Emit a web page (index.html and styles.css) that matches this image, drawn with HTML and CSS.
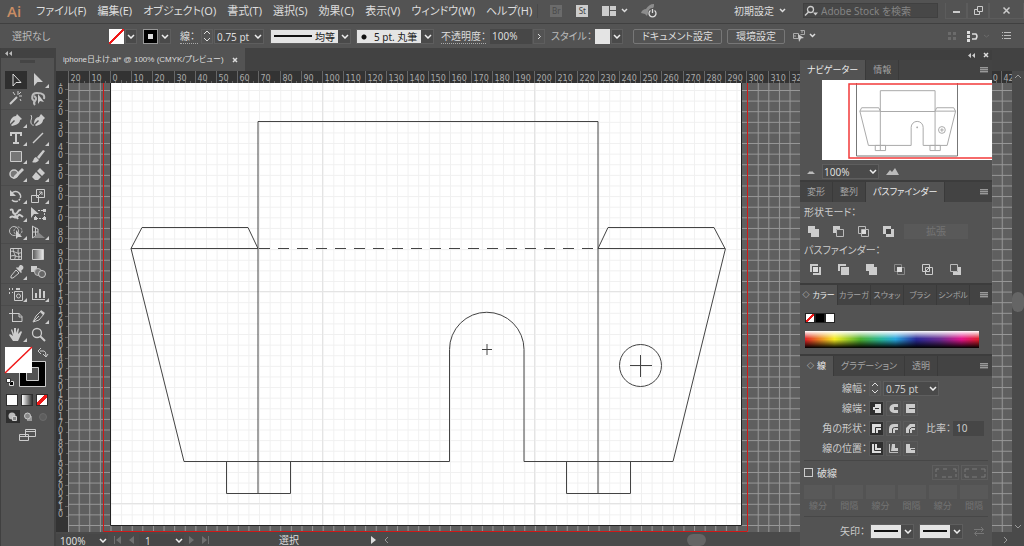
FILE: index.html
```html
<!DOCTYPE html>
<html lang="ja">
<head>
  <meta charset="utf-8">
  <title>iphone日よけ.ai</title>
  <link rel="stylesheet" href="styles.css">
</head>
<body>
  <header class="menubar">
    <span class="logo">Ai</span>
    <nav class="menus">
      <button>ファイル(F)</button>
      <button>編集(E)</button>
      <button>オブジェクト(O)</button>
      <button>書式(T)</button>
      <button>選択(S)</button>
      <button>効果(C)</button>
      <button>表示(V)</button>
      <button>ウィンドウ(W)</button>
      <button>ヘルプ(H)</button>
    </nav>
    <div class="apps">
      <button class="app off">Br</button>
      <button class="app">St</button>
      <button class="layout" aria-label="レイアウト">
        <svg width="14" height="10"><path fill="#ccc" d="M0 0h7v10H0zM8 0h6v4H8zM8 5h6v5H8z"/></svg>
      </button>
      <svg class="chev" width="7" height="5"><path d="M1 1l2.500 2.500L6 1"/></svg>
      <button class="rocket" aria-label="GPU">
        <svg width="16" height="14"><path fill="#8d8d8d" d="M0 9C1 6 3 5 5 5 7 2 9 0 13 0c0 2 0 3-1 4-3 0-5 2-5 5l-1 3-2-2z"/><path fill="none" stroke="#ddd" stroke-width="1.300" d="M9.500 6.500a3.500 3.500 0 1 0 4 0M11.500 5v4"/></svg>
      </button>
    </div>
    <div class="right">
      <button class="preset">初期設定</button>
      <svg class="chev" width="7" height="5"><path d="M1 1l2.500 2.500L6 1"/></svg>
      <label class="search">
        <svg width="14" height="12"><circle cx="6.500" cy="4.500" r="3" fill="none" stroke="#ccc" stroke-width="1.300"/><path d="M4.500 7L1 10.500" stroke="#ccc" stroke-width="1.500"/><path d="M9 7.500h5l-2.500 3z" fill="#ccc"/></svg>
        <input type="text" placeholder="Adobe Stock を検索" aria-label="検索">
      </label>
      <div class="window">
        <button aria-label="最小化"><svg width="9" height="9"><path fill="#ccc" d="M1 5h7v2H1z"/></svg></button>
        <button aria-label="元に戻す"><svg width="9" height="9"><path fill="none" stroke="#ccc" d="M3.500 5.500v-5h5v5zM3.500 3.500h-3v5h5v-3"/></svg></button>
        <button class="wide" aria-label="閉じる"><svg width="9" height="9"><path stroke="#ccc" stroke-width="1.500" d="M1.500 1.500l6 6M7.500 1.500l-6 6"/></svg></button>
      </div>
    </div>
  </header>

  <div class="control">
    <span class="state">選択なし</span>
    <div class="pair">
      <button class="none" aria-label="塗り"></button>
      <select aria-label="塗りの種類"><option></option></select>
    </div>
    <div class="pair">
      <button class="stroke" aria-label="線の色"></button>
      <select aria-label="線の種類"><option></option></select>
    </div>
    <label class="dotted weight" for="weight">線：</label>
    <div class="pair">
      <button class="spin" aria-label="増減"><svg width="8" height="12"><path d="M1 4l3-3 3 3M1 8l3 3 3-3"/></svg></button>
      <select class="value" id="weight"><option>0.75 pt</option></select>
    </div>
    <select class="light profile" aria-label="可変線幅"><option>均等</option></select>
    <select class="light brush" aria-label="ブラシ"><option>5 pt. 丸筆</option></select>
    <div class="pair">
      <label class="dotted" for="opacity">不透明度：</label>
      <input class="opacity" id="opacity" type="text" value="100%">
      <button class="step" aria-label="不透明度を開く"><svg width="5" height="7"><path d="M1 1l2.500 2.500L1 6"/></svg></button>
    </div>
    <div class="pair">
      <label class="style" for="style">スタイル：</label>
      <span class="sample"></span>
      <select id="style"><option></option></select>
    </div>
    <div class="buttons">
      <button class="outlined">ドキュメント設定</button>
      <button class="outlined">環境設定</button>
    </div>
    <svg width="23" height="12"><path fill="none" stroke="#aaa" d="M.500 3.500h5v5h-5zM7.500.500h4v4h-4M0 6h3M9 0v3"/><path fill="#ccc" d="M5 4l6 4-3 .500L6 12z"/><path fill="none" stroke="#ddd" stroke-width="1.500" d="M17 4l2.500 2.500L22 4"/></svg>
    <div class="align">
      <svg width="8" height="8"><path fill="#6b6b6b" d="M0 0h3v3H0zM5 0h3v3H5zM0 5h3v3H0zM5 5h3v3H5z"/></svg>
      <svg width="24" height="11"><path fill="#ddd" d="M0 0h3v3H0zM0 4h3v3H0zM0 8h3v3H0z"/><path fill="none" stroke="#ddd" stroke-width="1.500" d="M5 3h4q2 2 0 5H5"/><path fill="none" stroke="#6b6b6b" d="M17 4l2.500 2L22 4"/></svg>
      <svg width="9" height="8"><path fill="#bbb" d="M0 0h1v1H0zM2 0h7v1H2zM0 3h1v1H0zM2 3h7v1H2zM0 6h1v1H0zM2 6h7v1H2z"/></svg>
    </div>
  </div>

  <main class="work">
    <aside class="toolbox">
      <div class="fold"><svg width="7" height="5"><path fill="#bbb" d="M3 0v5L0 2.500zM7 0v5L4 2.500z"/></svg></div>
      <div class="handle"></div>
      <div class="tools">
        <button class="on" aria-label="選択"><svg><path fill="none" stroke="#ddd" d="M5 2v12l3-3.500h5z"/></svg></button>
        <button class="more" aria-label="ダイレクト選択"><svg><path fill="#ccc" d="M4 1v13l3.500-4H13z"/></svg></button>
        <button aria-label="自動選択"><svg><path stroke="#ccc" stroke-width="2" d="M2 14l7-7"/><path stroke="#ccc" d="M10 1v4M14 6h-3M5 2l2 3M13 2l-2 2M12 9l1 2"/></svg></button>
        <button aria-label="なげなわ"><svg><path fill="none" stroke="#bbb" stroke-width="2" d="M5 11C1 10 1 3 7 3s8 2 7 6M4 6c2 1 3 3 1 5s-1 3 0 4"/><path fill="#ccc" d="M8 4v10l2-3 4 1z"/></svg></button>
      </div>
      <div class="tools">
        <button class="more" aria-label="ペン"><svg><path fill="#ccc" d="M9 2l5 5-2 1c0 3-3 5-8 6l-1-1 4-4-1-1-4 4C2 7 5 4 8 4z"/></svg></button>
        <button aria-label="曲線"><svg><path fill="#ccc" d="M11 2l4 4-2 2c0 3-3 5-7 6l-1-1 4-4-1-1-4 4c0-4 2-7 5-7z"/><path fill="none" stroke="#ccc" d="M1 3c2 3-1 5 0 8s3 2 3 2"/></svg></button>
        <button class="more" aria-label="文字"><svg><path fill="none" stroke="#ccc" stroke-width="2" d="M3 6V3h10v3M8 3v10M5 13h6"/></svg></button>
        <button class="more" aria-label="直線"><svg><path stroke="#ccc" stroke-width="1.500" d="M3 13L13 3"/></svg></button>
        <button class="more" aria-label="長方形"><svg><path fill="#777" stroke="#ccc" d="M2.500 3.500h11v10h-11z"/></svg></button>
        <button class="more" aria-label="ブラシ"><svg><path fill="#ccc" d="M13 2l2 1-6 8-2-2zM6 9l3 3c-2 3-5 3-7 2 2-1 1-4 4-5z"/></svg></button>
        <button class="more" aria-label="Shaper"><svg><circle cx="6" cy="8" r="4" fill="#777" stroke="#ccc" stroke-width="1.500"/><path fill="#ccc" d="M14 2l2 2-8 8-3 1 1-3z"/></svg></button>
        <button class="more" aria-label="消しゴム"><svg><path fill="#ccc" d="M10 2l5 5-3 3-5-5zM6 6l5 5-3 3H5l-3-3z"/></svg></button>
      </div>
      <div class="tools">
        <button class="more" aria-label="回転"><svg><path fill="none" stroke="#ccc" stroke-width="1.500" d="M4 5a5 5 0 1 1 0 7" stroke-dasharray="13 1 2 1"/><path fill="#ccc" d="M2 2v6h6z"/></svg></button>
        <button class="more" aria-label="拡大・縮小"><svg><path fill="none" stroke="#ccc" d="M6.500 1.500h8v8h-8zM1.500 7.500h7v7h-7zM8 8l4-4M9 4h3v3"/></svg></button>
        <button class="more" aria-label="線幅"><svg><path fill="none" stroke="#ccc" stroke-width="2" d="M2 4c5-2 1 4 5 4s2-5 6-4M2 12c2-4 5 1 7-1s1-4 6 0M5 6l5 7"/></svg></button>
        <button aria-label="自由変形"><svg><path fill="#ccc" d="M1 1v11l3-4h5z"/><path fill="none" stroke="#ccc" stroke-dasharray="2 1" d="M8 4.500h6.500v8h-9V9"/><path fill="#ccc" d="M13 3h3v3h-3zM13 11h3v3h-3zM4 11h3v3H4z"/></svg></button>
        <button class="more" aria-label="シェイプ形成"><svg><circle cx="6" cy="7" r="4.500" fill="none" stroke="#bbb"/><circle cx="10" cy="7" r="4" fill="none" stroke="#bbb" stroke-dasharray="2 1"/><path fill="#ccc" d="M8 6v9l2-2h4z"/></svg></button>
        <button class="more" aria-label="遠近グリッド"><svg><path fill="none" stroke="#ccc" d="M2.500 2v12M2 2l6 3v6l-6 3M5.500 4v9M2 8h6"/><path fill="#888" d="M8 8l7 6H4z"/></svg></button>
      </div>
      <div class="tools">
        <button aria-label="メッシュ"><svg><path fill="none" stroke="#ccc" d="M2.500 2.500h11v11h-11zM2 6c4-3 7 4 12 0M2 11c4-4 8 2 12-1M6 2c-3 4 4 7 0 12M11 2c-3 4 2 8-1 12"/></svg></button>
        <button aria-label="グラデーション"><svg><defs><linearGradient id="gray"><stop stop-color="#555"/><stop offset="1" stop-color="#eee"/></linearGradient></defs><path fill="url(#gray)" stroke="#ccc" d="M2.500 3.500h11v10h-11z"/></svg></button>
        <button class="more" aria-label="スポイト"><svg><path fill="#ccc" d="M12 1c3 0 4 2 3 4l-2 2 1 1-1 1-5-5 1-1 1 1z"/><path fill="none" stroke="#ccc" d="M8 6l3 3-6 5H3v-2z"/></svg></button>
        <button aria-label="ブレンド"><svg><path fill="#ccc" d="M1 2h6v6H1z"/><circle cx="8" cy="8" r="3.500" fill="#777" stroke="#bbb"/><circle cx="12" cy="10" r="3.500" fill="#666" stroke="#ccc"/></svg></button>
      </div>
      <div class="tools">
        <button class="more" aria-label="シンボルスプレー"><svg><path fill="#ccc" d="M1 2h1v2H1zM4 2h1v2H4zM1 6h1v2H1zM4 6h1v1H4zM8 2h4v2H8z"/><path fill="none" stroke="#ccc" d="M6.500 5.500h8v9h-8z"/><circle cx="10.500" cy="10" r="2" fill="none" stroke="#ccc"/></svg></button>
        <button class="more" aria-label="棒グラフ"><svg><path fill="#ccc" d="M2 2h1v12H2zM2 13h13v1H2zM5 7h2v5H5zM9 3h2v9H9zM13 5h2v7h-2z"/></svg></button>
      </div>
      <div class="tools last">
        <button aria-label="アートボード"><svg><path fill="none" stroke="#ccc" d="M4.500 1v13M1 5.500h7M4 13.500h10v-5l-3-3H7M11 5v4h3"/></svg></button>
        <button class="more" aria-label="スライス"><svg><path fill="none" stroke="#ccc" d="M11 3l3 3-5 6-6 2 3-6zM4 13l5-5"/><path fill="#ccc" d="M11 2l4 3-2 2-3-3z"/></svg></button>
        <button class="more" aria-label="手のひら"><svg><path fill="#ccc" d="M5 15L1 9l1-1 3 2-2-6 1-1 2 5V2h2v5l2-5 1 1-1 5 3-3 1 1-3 7-1 2z"/></svg></button>
        <button aria-label="ズーム"><svg><circle cx="7" cy="7" r="4.500" fill="none" stroke="#ccc" stroke-width="1.300"/><path stroke="#ccc" stroke-width="2" d="M10 10l5 5"/></svg></button>
      </div>
      <svg class="paint" width="42" height="42">
        <path fill="none" stroke="#ccc" d="M35 4h4q2 0 2 5M36 1l-3 3 3 3M38 7l3 3 2-3"/>
        <path fill="#000" stroke="#ccc" d="M14.500 14.500h26v25h-26z"/>
        <path fill="#535353" stroke="#ccc" d="M21.500 20.500h12v13h-12z"/>
        <path fill="#fff" d="M0 0h27v26H0z"/>
        <path stroke="#f01818" stroke-width="1.500" d="M0 26L27 0"/>
        <path fill="#000" stroke="#ddd" d="M4.500 34.500h4v4h-4z"/><path fill="#fff" stroke="#333" d="M1.500 31.500h4v4h-4z"/>
      </svg>
      <div class="modes">
        <button class="white" aria-label="カラー"></button>
        <button class="grad" aria-label="グラデーション塗り"></button>
        <button class="none thick" aria-label="なし"></button>
      </div>
      <div class="modes draw">
        <button class="on" aria-label="標準描画"><svg width="10" height="10"><circle cx="4" cy="4" r="3.500" fill="#bbb"/><path fill="#888" stroke="#ccc" d="M4.500 4.500h4v4h-4z"/></svg></button>
        <button aria-label="背面描画"><svg width="10" height="10"><path fill="#999" d="M4 4h5v5H4z"/><circle cx="4.500" cy="4" r="3" fill="#888" stroke="#ccc"/></svg></button>
        <button aria-label="内側描画"><svg width="10" height="10"><circle cx="5" cy="5" r="3.500" fill="#5e5e5e" stroke="#6b6b6b"/></svg></button>
      </div>
      <svg class="screen" width="18" height="13"><path fill="#535353" stroke="#ccc" d="M6.500.500h10v7h-10zM6 2.500h11M.500 5.500h9v6h-9zM0 7.500h10"/></svg>
    </aside>

    <section class="document">
      <div class="tabs">
        <div class="tab">iphone日よけ.ai* @ 100% (CMYK/プレビュー)
          <button aria-label="タブを閉じる"><svg width="6" height="6"><path stroke="#ddd" stroke-width="1.500" d="M1 1l4 4M5 1L1 5"/></svg></button>
        </div>
      </div>
      <div class="body">
        <div class="corner"></div>
        <svg class="ruler-x" id="rulerX"></svg>
        <div class="scroll-v">
          <svg width="8" height="5"><path d="M1 4l3-3 3 3"/></svg>
          <i></i>
          <svg width="8" height="5"><path d="M1 1l3 3 3-3"/></svg>
        </div>
        <svg class="ruler-y" id="rulerY"></svg>
        <svg class="canvas">
          <defs>
            <pattern id="gridDark" x="42.500" y="7" width="10.610" height="10.610" patternUnits="userSpaceOnUse">
              <path d="M0 .500h10.610M.500 0v10.610" stroke="#989898"/>
            </pattern>
            <pattern id="gridLight" x="42.500" y="7" width="10.610" height="10.610" patternUnits="userSpaceOnUse">
              <path d="M0 .500h10.610M.500 0v10.610" stroke="#f0f0f0"/>
            </pattern>
            <g id="artwork" fill="none">
              <path vector-effect="non-scaling-stroke" d="M148 413.500V41.500h340v372"/>
              <path vector-effect="non-scaling-stroke" d="M148 168.500H21l11-21h106zM488 168.500h127l-11-21H498z"/>
              <path vector-effect="non-scaling-stroke" d="M21 168.500l53 213h265.500v-112a37.250 37.250 0 0 1 74.500 0v112h149l52.500-213"/>
              <path vector-effect="non-scaling-stroke" d="M116.500 381.500h64v32h-64zM456.500 381.500h64v32h-64z"/>
              <circle vector-effect="non-scaling-stroke" cx="530.500" cy="285.500" r="21"/>
              <path vector-effect="non-scaling-stroke" d="M520 285.500h22M530.500 275v22M372 269.500h10M377 264v11"/>
            </g>
          </defs>
          <rect width="100%" height="100%" fill="#5f5f5f"/>
          <rect width="100%" height="100%" fill="url(#gridDark)"/>
          <g transform="translate(42 -3)">
            <path fill="#fff" d="M.500 0h631v445.500H.500z"/>
          </g>
          <path fill="url(#gridLight)" d="M42 0h631v442H42z"/>
          <path stroke="#e4e4e4" d="M254.500 0v442M466.500 0v442M42 208.500h631M42 420.500h631"/>
          <g transform="translate(42 -3)">
            <path fill="none" stroke="#222" d="M.500 0v445.500h631V0"/>
            <path fill="none" stroke="#d01818" d="M-6.500 0v451.500h644V0"/>
            <use href="#artwork" stroke="#444"/>
            <path stroke="#444" stroke-dasharray="11 8" d="M149 168.500h338"/>
          </g>
        </svg>
      </div>
      <footer class="status">
        <select class="zoom" aria-label="ズーム"><option>100%</option></select>
        <button aria-label="最初"><svg width="8" height="8"><path d="M0 0h1v8H0zM7 0v8L2 4z"/></svg></button>
        <button aria-label="前へ"><svg width="8" height="8"><path d="M6 0v8L1 4z"/></svg></button>
        <select class="page" aria-label="アートボード番号"><option>1</option></select>
        <button aria-label="次へ"><svg width="8" height="8"><path d="M2 0v8l5-4z"/></svg></button>
        <button aria-label="最後"><svg width="8" height="8"><path d="M1 0v8l5-4zM7 0h1v8H7z"/></svg></button>
        <span class="mode">選択</span>
        <button class="lit" aria-label="状態メニュー"><svg width="8" height="8"><path d="M2 0v8l5-4z"/></svg></button>
        <div class="scroll-h">
          <svg width="5" height="8"><path d="M4 1L1 4l3 3"/></svg>
          <i></i>
          <svg width="5" height="8"><path d="M1 1l3 3-3 3"/></svg>
        </div>
      </footer>
    </section>
  </main>

  <aside class="dock">
    <div class="dock-head">
      <svg width="7" height="5"><path fill="#ccc" d="M3 0v5L0 2.500zM7 0v5L4 2.500z"/></svg>
      <svg width="6" height="6"><path stroke="#ddd" stroke-width="1.500" d="M1 1l4 4M5 1L1 5"/></svg>
    </div>

    <section class="panel">
      <div class="panel-tabs">
        <button class="on">ナビゲーター</button><button>情報</button>
        <span class="lines"></span>
      </div>
      <svg class="preview" viewBox="0 0 170 80">
        <path fill="#fff" d="M0 0h170v80H0z"/>
        <path fill="none" stroke="#777" d="M34.500 3v73h101V3"/>
        <use href="#artwork" stroke="#aaa" transform="translate(34.500 4) scale(.161)"/>
        <path stroke="#aaa" d="M58 31.500h55"/>
        <path fill="none" stroke="#f23a3a" stroke-width="1.500" d="M172 4H27v74h145"/>
      </svg>
      <div class="nav-zoom">
        <svg width="8" height="5"><path fill="#bbb" d="M0 5l3-3 1 1 1-1 3 3z"/></svg>
        <select aria-label="表示倍率"><option>100%</option></select>
        <svg width="13" height="7"><path fill="#bbb" d="M0 7l4-5 2 2 3-4 4 7z"/></svg>
      </div>
    </section>

    <section class="panel">
      <div class="panel-tabs">
        <button>変形</button><button>整列</button><button class="on">パスファインダー</button>
        <span class="lines"></span>
      </div>
      <div class="path">
        <h2>形状モード：</h2>
        <div class="shapes">
          <button aria-label="合体"><svg><path fill="#ccc" d="M1 1h7v3h4v8H4V8H1z"/></svg></button>
          <button aria-label="前面型抜き"><svg><path fill="#ccc" d="M1 1h7v3H4v4H1z"/><path fill="none" stroke="#bbb" d="M4.500 4.500h7v7h-7z"/></svg></button>
          <button aria-label="交差"><svg><path fill="none" stroke="#bbb" d="M1.500 1.500h7v7h-7zM4.500 4.500h7v7h-7z"/><path fill="#ddd" d="M5 5h4v4H5z"/></svg></button>
          <button aria-label="中マド"><svg><path fill="#ccc" d="M1 1h8v3h3v8H4V9H1z"/><path fill="#444" d="M4 4h5v5H4z"/></svg></button>
          <button class="expand" disabled>拡張</button>
        </div>
        <h2>パスファインダー：</h2>
        <div class="shapes finder">
          <button aria-label="分割"><svg><path fill="#ccc" d="M1 1h8v2H3v6H1zM12 12H4v-2h6V4h2z"/><path fill="#ddd" d="M4 4h5v5H4z"/></svg></button>
          <button aria-label="刈り込み"><svg><path fill="#ccc" d="M1 1h8v2H3v5H1zM4 4h8v8H4z"/></svg></button>
          <button aria-label="合流"><svg><path fill="#ccc" d="M1 1h8v3h3v8H4V8H1z"/></svg></button>
          <button aria-label="切り抜き"><svg><path fill="none" stroke="#888" d="M1.500 1.500h7v7h-7zM4.500 4.500h7v7h-7z"/><path fill="#ddd" d="M4 4h5v5H4z"/></svg></button>
          <button aria-label="アウトライン"><svg><path fill="none" stroke="#ccc" d="M1.500 1.500h7v7h-7zM4.500 4.500h7v7h-7zM4 9l5-5"/></svg></button>
          <button aria-label="背面型抜き"><svg><path fill="#ccc" d="M9 4h3v8H4V9h5z"/><path fill="none" stroke="#bbb" d="M1.500 1.500h7v7h-7z"/></svg></button>
        </div>
      </div>
    </section>

    <section class="panel">
      <div class="panel-tabs small">
        <button class="on"><i>◇</i>カラー</button><button>カラーガ</button><button>スウォッ</button><button>ブラシ</button><button>シンボル</button>
        <span class="lines"></span>
      </div>
      <div class="color">
        <div class="chips"><button class="none" aria-label="なし"></button><button class="black" aria-label="黒"></button><button class="white" aria-label="白"></button></div>
        <div class="spectrum"></div>
      </div>
    </section>

    <section class="panel">
      <div class="panel-tabs">
        <button class="on"><i>◇</i>線</button><button>グラデーション</button><button>透明</button>
        <span class="lines"></span>
      </div>
      <div class="line-form">
        <div class="row">
          <label for="width">線幅：</label>
          <button class="spin" aria-label="増減"><svg width="8" height="12"><path d="M1 4l3-3 3 3M1 8l3 3 3-3"/></svg></button>
          <select class="value" id="width"><option>0.75 pt</option></select>
        </div>
        <div class="row">
          <span class="name">線端：</span>
          <button class="on" aria-label="線端なし"><svg><path fill="#ddd" d="M4 1h6v9H4V7H2V4h2z"/><path fill="#333" d="M4 5h4v1H4z"/></svg></button>
          <button aria-label="丸型線端"><svg><path fill="#ccc" d="M10 1H6C0 1 0 10 6 10h4V7H6V4h4z"/></svg></button>
          <button aria-label="突出線端"><svg><path fill="#ccc" d="M1 1h9v9H1z"/><path fill="#444" d="M4 5h6v1H4z"/></svg></button>
        </div>
        <div class="row">
          <span class="name">角の形状：</span>
          <button class="on" aria-label="マイター結合"><svg><path fill="#ddd" d="M1 1h9v6H7v3H1z"/><path stroke="#333" fill="none" d="M4.500 10V4.500H10"/></svg></button>
          <button aria-label="ラウンド結合"><svg><path fill="#ccc" d="M1 10V6q0-5 5-5h4v6H7v3z"/><path stroke="#444" fill="none" d="M4.500 10V6q0-1 2-1.500H10"/></svg></button>
          <button aria-label="ベベル結合"><svg><path fill="#ccc" d="M1 10V5l4-4h5v6H7v3z"/><path stroke="#444" fill="none" d="M4.500 10V6.500l2-2H10"/></svg></button>
          <label class="ratio" for="ratio">比率：</label>
          <input id="ratio" type="text" value="10">
        </div>
        <div class="row">
          <span class="name">線の位置：</span>
          <button class="on" aria-label="中央"><svg><path fill="#ddd" d="M1 1h5v4h4v5H1z"/><path stroke="#333" fill="none" d="M3.500 1v6.500H10"/></svg></button>
          <button aria-label="内側"><svg><path fill="#ccc" d="M4 1h3v4h3v3H3z"/><path stroke="#bbb" fill="none" d="M1.500 1v8.500H10"/></svg></button>
          <button aria-label="外側"><svg><path fill="#ccc" d="M1 1h4v4h5v5H1z"/><path stroke="#555" fill="none" d="M6 6.500h4"/></svg></button>
        </div>
      </div>
      <div class="dashes">
        <div class="dash-head">
          <label><input type="checkbox">破線</label>
          <button aria-label="長さを保持" disabled><svg width="22" height="10"><path d="M4 1H1v3M1 6v3M7 9h4M13 9h4M18 1h3v3M21 6v3M8 1h4"/></svg></button>
          <button aria-label="コーナーに整列" disabled><svg width="22" height="10"><path d="M5 1H1v3M1 6v3h4M8 9h5M17 9h4V6M21 4V1h-4M8 1h5"/></svg></button>
        </div>
        <div class="dash-cells">
          <label><input type="text" disabled>線分</label>
          <label><input type="text" disabled>間隔</label>
          <label><input type="text" disabled>線分</label>
          <label><input type="text" disabled>間隔</label>
          <label><input type="text" disabled>線分</label>
          <label><input type="text" disabled>間隔</label>
        </div>
      </div>
      <div class="arrows">
        <label for="arrow">矢印：</label>
        <select class="light" id="arrow"><option></option></select>
        <select class="light" aria-label="終点の矢印"><option></option></select>
        <svg width="10" height="9"><path stroke="#777" fill="none" d="M0 2.500h9M7 0l2.500 2.500L7 5M10 6.500H1M3 4L.500 6.500 3 9"/></svg>
      </div>
    </section>
  </aside>

  <script src="script.js"></script>
</body>
</html>
```

FILE: styles.css
```css
* {
  box-sizing: border-box;
}

body {
  display: flex;
  flex-direction: column;
  position: relative;
  height: 100vh;
  margin: 0;
  overflow: hidden;
  background: #424242;
  color: #ddd;
  font-family: "Noto Sans", "Noto Sans CJK JP", sans-serif;
  font-size: 10px;
  line-height: 14px;
  font-feature-settings: "palt";
}

button, input, select {
  margin: 0;
  padding: 0;
  border: 0;
  border-radius: 0;
  background: none;
  color: inherit;
  font: inherit;
  font-feature-settings: inherit;
}

button {
  display: flex;
  align-items: center;
  justify-content: center;
  flex: none;
  white-space: nowrap;
}

svg {
  display: block;
  flex: none;
}

select {
  flex: none;
  appearance: none;
  width: 12px;
  height: 15px;
  border: 1px solid #5e5e5e;
  background: #4a4a4a url("data:image/svg+xml,%3Csvg xmlns='http://www.w3.org/2000/svg' width='8' height='5'%3E%3Cpath d='M1 1l3 3 3-3' fill='none' stroke='%23eee' stroke-width='1.5'/%3E%3C/svg%3E") no-repeat right 1px center;
}

.chev path, .spin path, .step path, .scroll-v path, .scroll-h path {
  fill: none;
  stroke: #ddd;
  stroke-width: 1.5px;
}

.none {
  background: linear-gradient(to bottom right, #fff 46%, #f01818 46%, #f01818 54%, #fff 54%);
}

.none.thick {
  background: linear-gradient(to bottom right, #fff 38%, #f01818 38%, #f01818 62%, #fff 62%);
}

.white {
  background: #fff;
}

.black {
  background: #000;
}

/* menu bar */
.menubar {
  display: flex;
  align-items: center;
  flex: none;
  height: 24px;
  padding: 0 0 2px 7px;
  background: #535353;
  border-bottom: 1px solid #404040;
}

.logo {
  width: 29px;
  color: #c98d64;
  font-family: "Open Sans", sans-serif;
  font-size: 15px;
  font-weight: 600;
}

.menus {
  display: flex;
  gap: 11px;
  font-size: 11px;
}

.apps {
  display: flex;
  align-items: center;
  margin-left: 5px;
  padding-left: 12px;
  border-left: 1px solid #4a4a4a;
}

.app {
  width: 12px;
  height: 12px;
  margin-right: 14px;
  background: #ccc;
  color: #444;
  font-size: 8px;
  line-height: 12px;
}

.app.off {
  background: #6b6b6b;
  color: #4a4a4a;
}

.layout {
  margin-right: 5px;
}

.rocket {
  margin-left: 13px;
}

.right {
  display: flex;
  align-items: center;
  margin-left: auto;
}

.preset {
  margin-right: 5px;
}

.search {
  display: flex;
  align-items: center;
  width: 135px;
  height: 15px;
  margin: 0 7px 0 17px;
  background: #474747;
  border: 1px solid #404040;
}

.search input {
  width: 110px;
  margin-left: 3px;
}

.search input::placeholder {
  color: #848484;
}

.window {
  display: flex;
}

.window button {
  width: 22px;
  height: 16px;
  border: 1px solid #5c5c5c;
  border-top: 0;
}

.window .wide {
  width: 35px;
}

/* control bar */
.control {
  display: flex;
  align-items: center;
  flex: none;
  height: 24px;
  padding-left: 12px;
  background: #535353;
}

.state {
  width: 97px;
  color: #bbb;
}

.pair {
  display: flex;
  align-items: center;
  gap: 1px;
  margin-right: 6px;
}

.pair .none, .pair .stroke, .sample {
  width: 15px;
  height: 15px;
}

.stroke {
  border: 5px solid #000;
  outline: 1px solid #999;
  outline-offset: -1px;
  background: #ddd;
}

.dotted {
  border-bottom: 1px dotted #aaa;
}

.weight {
  width: 18px;
  margin: 0 3px;
  white-space: nowrap;
}

.spin {
  width: 12px;
  height: 15px;
  border: 1px solid #5e5e5e;
}

.spin path, .step path {
  stroke-width: 1px;
}

.value {
  width: 50px;
  padding-left: 2px;
}

.light {
  width: 81px;
  margin-right: 5px;
  color: #222;
  background:
    url("data:image/svg+xml,%3Csvg xmlns='http://www.w3.org/2000/svg' width='8' height='5'%3E%3Cpath d='M1 1l3 3 3-3' fill='none' stroke='%23eee' stroke-width='1.5'/%3E%3C/svg%3E") no-repeat right 1px center,
    linear-gradient(#4a4a4a, #4a4a4a) no-repeat right / 12px 100%,
    linear-gradient(#111, #111) no-repeat 3px center / 38px 2px,
    #e4e4e4;
}

.profile {
  padding-left: 44px;
}

.brush {
  width: 78px;
  margin-right: 7px;
  padding-left: 17px;
  background:
    url("data:image/svg+xml,%3Csvg xmlns='http://www.w3.org/2000/svg' width='8' height='5'%3E%3Cpath d='M1 1l3 3 3-3' fill='none' stroke='%23eee' stroke-width='1.5'/%3E%3C/svg%3E") no-repeat right 1px center,
    linear-gradient(#4a4a4a, #4a4a4a) no-repeat right / 12px 100%,
    radial-gradient(circle at 7px 7px, #111 2px, #e4e4e4 3px);
}

.opacity {
  width: 42px;
  height: 15px;
  margin-left: 3px;
  padding-left: 2px;
  background: #474747;
}

.step {
  width: 12px;
  height: 15px;
  border: 1px solid #5e5e5e;
}

.style {
  width: 43px;
  color: #bbb;
  white-space: nowrap;
}

.sample {
  background: #e4e4e4;
}

.buttons {
  display: flex;
  gap: 5px;
  margin: 0 8px 0 4px;
}

.outlined {
  height: 15px;
  padding: 0 8px;
  border: 1px solid #777;
  border-radius: 2px;
}

.align {
  display: flex;
  align-items: center;
  gap: 11px;
  margin: 0 13px 0 auto;
}

/* work area */
.work {
  display: flex;
  flex: 1;
  min-height: 0;
}

.toolbox {
  width: 54px;
  flex: none;
  margin-right: 2px;
  background: #535353;
  border-left: 1px solid #404040;
}

.fold {
  height: 10px;
  padding: 3px 4px;
  background: #424242;
}

.handle {
  width: 15px;
  height: 3px;
  margin: 2px auto 7px;
  background: #454545;
}

.tools {
  display: grid;
  grid-template-columns: 22px 22px;
  grid-auto-rows: 18px;
  padding: 1px 0 2px 4px;
  border-bottom: 1px solid #4b4b4b;
}

.tools.last {
  padding-bottom: 0;
  border: 0;
}

.tools button {
  position: relative;
}

.tools svg {
  width: 16px;
  height: 16px;
}

.tools .on, .draw .on {
  background: #2f2f2f;
}

/* small corner mark for tools with a flyout */
.more::after {
  content: "";
  position: absolute;
  right: 0;
  bottom: 1px;
  border: 2px solid #ccc;
  border-top-color: transparent;
  border-left-color: transparent;
}

.paint {
  margin: 4px 0 0 4px;
  overflow: visible;
}

.modes {
  display: flex;
  gap: 5px;
  margin: 6px 0 0 6px;
}

.modes button {
  width: 10px;
  height: 10px;
  outline: 1px solid #2f2f2f;
}

.modes .grad {
  background: linear-gradient(to right, #fff, #333);
}

.modes.draw {
  gap: 1px;
  margin: 5px 0 6px 5px;
}

.modes.draw button {
  width: 14px;
  height: 13px;
  outline: 0;
}

.screen {
  margin: 0 auto 0 18px;
}

/* document window */
.document {
  display: flex;
  flex-direction: column;
  flex: 1;
  min-width: 0;
}

.tabs {
  display: flex;
  flex: none;
  height: 23px;
}

.tab {
  display: flex;
  align-items: center;
  gap: 8px;
  padding: 0 7px;
  background: #535353;
  font-family: "Liberation Sans", "Noto Sans CJK JP", sans-serif;
  font-size: 8px;
  white-space: nowrap;
}

.body {
  display: grid;
  flex: 1;
  min-height: 0;
  grid-template-columns: 12px 1fr 12px;
  grid-template-rows: 12px 1fr;
}

.corner, .ruler-x, .ruler-y {
  background: #333;
}

.ruler-x, .ruler-y, .canvas {
  width: 100%;
  height: 100%;
  min-width: 0;
  min-height: 0;
}

.ruler-x text, .ruler-y text {
  fill: #aaa;
  font-family: "DejaVu Sans", sans-serif;
  font-size: 8px;
}

.ruler-x path, .ruler-y path {
  stroke: #666;
}

.scroll-v {
  grid-row: 1 / 3;
  grid-column: 3;
  display: flex;
  flex-direction: column;
  align-items: center;
  justify-content: space-between;
  padding: 3px 0;
  background: #4a4a4a;
}

.scroll-v i {
  width: 12px;
  height: 20px;
  border-radius: 6px;
  background: #656565;
}

.scroll-v path, .scroll-h path {
  stroke: #999;
  stroke-width: 1px;
}

.status {
  display: flex;
  align-items: center;
  flex: none;
  height: 14px;
  padding-top: 2px;
  background: #4a4a4a;
}

.status select {
  height: 12px;
  border: 0;
  background-color: #474747;
}

.status .zoom {
  width: 52px;
  padding-left: 4px;
}

.status .page {
  width: 45px;
  padding-left: 6px;
}

.status button {
  width: 14px;
}

.status .zoom + button {
  margin-left: 3px;
}

.status button path {
  fill: #707070;
}

.status .lit path {
  fill: #ddd;
}

.mode {
  width: 154px;
  text-align: center;
}

.scroll-h {
  display: flex;
  align-items: center;
  justify-content: space-between;
  flex: 1;
  padding: 0 16px 0 4px;
}

.scroll-h i {
  width: 19px;
  height: 12px;
  border-radius: 6px;
  background: #656565;
}

/* floating panels */
.dock {
  position: absolute;
  top: 50px;
  right: 32px;
  bottom: 0;
  width: 192px;
  overflow: hidden;
  background: #535353;
}

.dock-head {
  display: flex;
  align-items: center;
  justify-content: flex-end;
  gap: 8px;
  height: 10px;
  padding-right: 3px;
  background: #3f3f3f;
}

.panel {
  border-bottom: 2px solid #3c3c3c;
}

.panel:last-child {
  border: 0;
}

.panel-tabs {
  display: flex;
  height: 20px;
  background: #434343;
  color: #a5a5a5;
  font-size: 9px;
}

.panel-tabs button {
  padding: 0 7px;
  border-right: 1px solid #3a3a3a;
}

.panel-tabs .on {
  background: #535353;
  color: #eee;
}

.panel-tabs i {
  margin-right: 3px;
  font-size: 7px;
  font-style: normal;
}

.panel-tabs.small {
  font-size: 8px;
}

.panel-tabs.small button {
  width: 33px;
  padding: 0;
}

.panel-tabs.small .on {
  width: 38px;
}

.lines {
  width: 8px;
  height: 6px;
  margin: 7px 4px 0 auto;
  background: repeating-linear-gradient(#999 0 1px, #666 1px 2px);
}

.preview {
  width: 170px;
  height: 80px;
  margin-left: 22px;
}

.nav-zoom {
  display: flex;
  align-items: center;
  gap: 7px;
  height: 20px;
  padding: 3px 7px 0;
}

.nav-zoom select {
  width: 57px;
  padding-left: 1px;
}

.path {
  height: 81px;
  padding: 3px 4px;
}

.path h2 {
  margin: 0;
  color: #ccc;
  font-size: 10px;
  font-weight: 400;
}

.shapes {
  display: flex;
  align-items: center;
  gap: 12px;
  height: 24px;
  padding-left: 3px;
}

.shapes svg {
  width: 13px;
  height: 13px;
}

.finder {
  gap: 15px;
  padding-left: 5px;
}

.expand {
  width: 64px;
  height: 15px;
  margin-left: -3px;
  background: #595959;
  color: #747474;
}

.color {
  height: 49px;
  padding: 8px 13px 0 5px;
}

.chips {
  display: flex;
}

.chips button {
  width: 10px;
  height: 10px;
  border: 1px solid #222;
}

.spectrum {
  height: 17px;
  margin-top: 8px;
  background:
    linear-gradient(#fff, transparent 45%, transparent 50%, #000),
    linear-gradient(to right, #e01f26, #f5ec22 17%, #4caf32 32%, #28b59c 44%, #27a5dc 52%, #2a2a98 64%, #6d2c91 78%, #e3148a 90%, #e01f26);
}

.chips .none {
  background: linear-gradient(to bottom right, #fff 40%, #f01818 40%, #f01818 60%, #fff 60%);
}

.line-form {
  display: flex;
  flex-direction: column;
  gap: 4px;
  margin: 0 4px;
  padding: 4px 0;
  border-bottom: 1px solid #474747;
}

.row {
  display: flex;
  align-items: center;
  gap: 2px;
  height: 16px;
  color: #ccc;
}

.row > :first-child {
  width: 63px;
  text-align: right;
}

.row button {
  width: 15px;
  height: 15px;
  border: 1px solid #5b5b5b;
}

.row .spin {
  width: 12px;
}

.row .on {
  background: #2f2f2f;
}

.row button:not(.spin) svg {
  width: 11px;
  height: 11px;
}

.row .value {
  width: 56px;
}

.row .ratio {
  margin-left: 6px;
}

.row input {
  width: 31px;
  height: 15px;
  padding-left: 3px;
  background: #464646;
}

.dashes {
  margin: 0 4px;
  padding: 3px 0;
  border-bottom: 1px solid #474747;
}

.dash-head {
  display: flex;
  align-items: center;
  gap: 2px;
  height: 17px;
}

.dash-head label {
  display: flex;
  align-items: center;
  gap: 4px;
  margin-right: auto;
}

.dash-head input {
  appearance: none;
  width: 9px;
  height: 9px;
  border: 1px solid #ccc;
}

.dash-head button {
  width: 27px;
  height: 15px;
  border: 1px solid #5e5e5e;
}

.dash-head path {
  fill: none;
  stroke: #7a7a7a;
}

.dash-cells {
  display: flex;
  gap: 3px;
  margin-top: 4px;
  color: #747474;
  font-size: 9px;
  text-align: center;
}

.dash-cells label {
  flex: 1;
  min-width: 0;
}

.dash-cells input {
  display: block;
  width: 100%;
  height: 14px;
  background: #595959;
}

.arrows {
  display: flex;
  align-items: center;
  height: 28px;
  padding-left: 40px;
  color: #ccc;
}

.arrows .light {
  width: 44px;
  margin: 0 0 0 5px;
  background-size: auto, 12px 100%, 24px 2px, auto;
}

.arrows svg {
  margin-left: 11px;
}
```

FILE: script.js
```js
var rulerX = document.getElementById('rulerX');
var rulerY = document.getElementById('rulerY');
var scale = 2.121; // pixels per mm at 100%

function add(parent, name, attrs, text) {
  var el = document.createElementNS('http://www.w3.org/2000/svg', name);
  for (var key in attrs) {
    el.setAttribute(key, attrs[key]);
  }
  if (text !== undefined) el.textContent = text;
  parent.appendChild(el);
}

// horizontal ruler, 0 sits on the left edge of the artboard
for (var mm = -20; mm <= 420; mm += 10) {
  var x = Math.round(42 + mm * scale) + 0.5;
  add(rulerX, 'path', { d: 'M' + x + ' 0v12' });
  add(rulerX, 'path', { d: 'M' + (x + 5) + ' 10v2M' + (x + 11) + ' 9v3M' + (x + 16) + ' 10v2' });
  add(rulerX, 'text', { x: x + 2, y: 10 }, Math.abs(mm));
}

// vertical ruler, the digits are stacked
for (var mm = 10; mm <= 210; mm += 10) {
  var digits = String(mm).split('');
  var long = digits.length > 2;
  var y = Math.round((long ? -25 : -18) + mm * scale);
  for (var i = 0; i < digits.length; i++) {
    add(rulerY, 'text', { x: 2, y: y + i * (long ? 7 : 8) }, digits[i]);
  }
  add(rulerY, 'path', { d: 'M9 ' + (y + 3.5) + 'h3M10 ' + (y + 13.5) + 'h2' });
}
```
